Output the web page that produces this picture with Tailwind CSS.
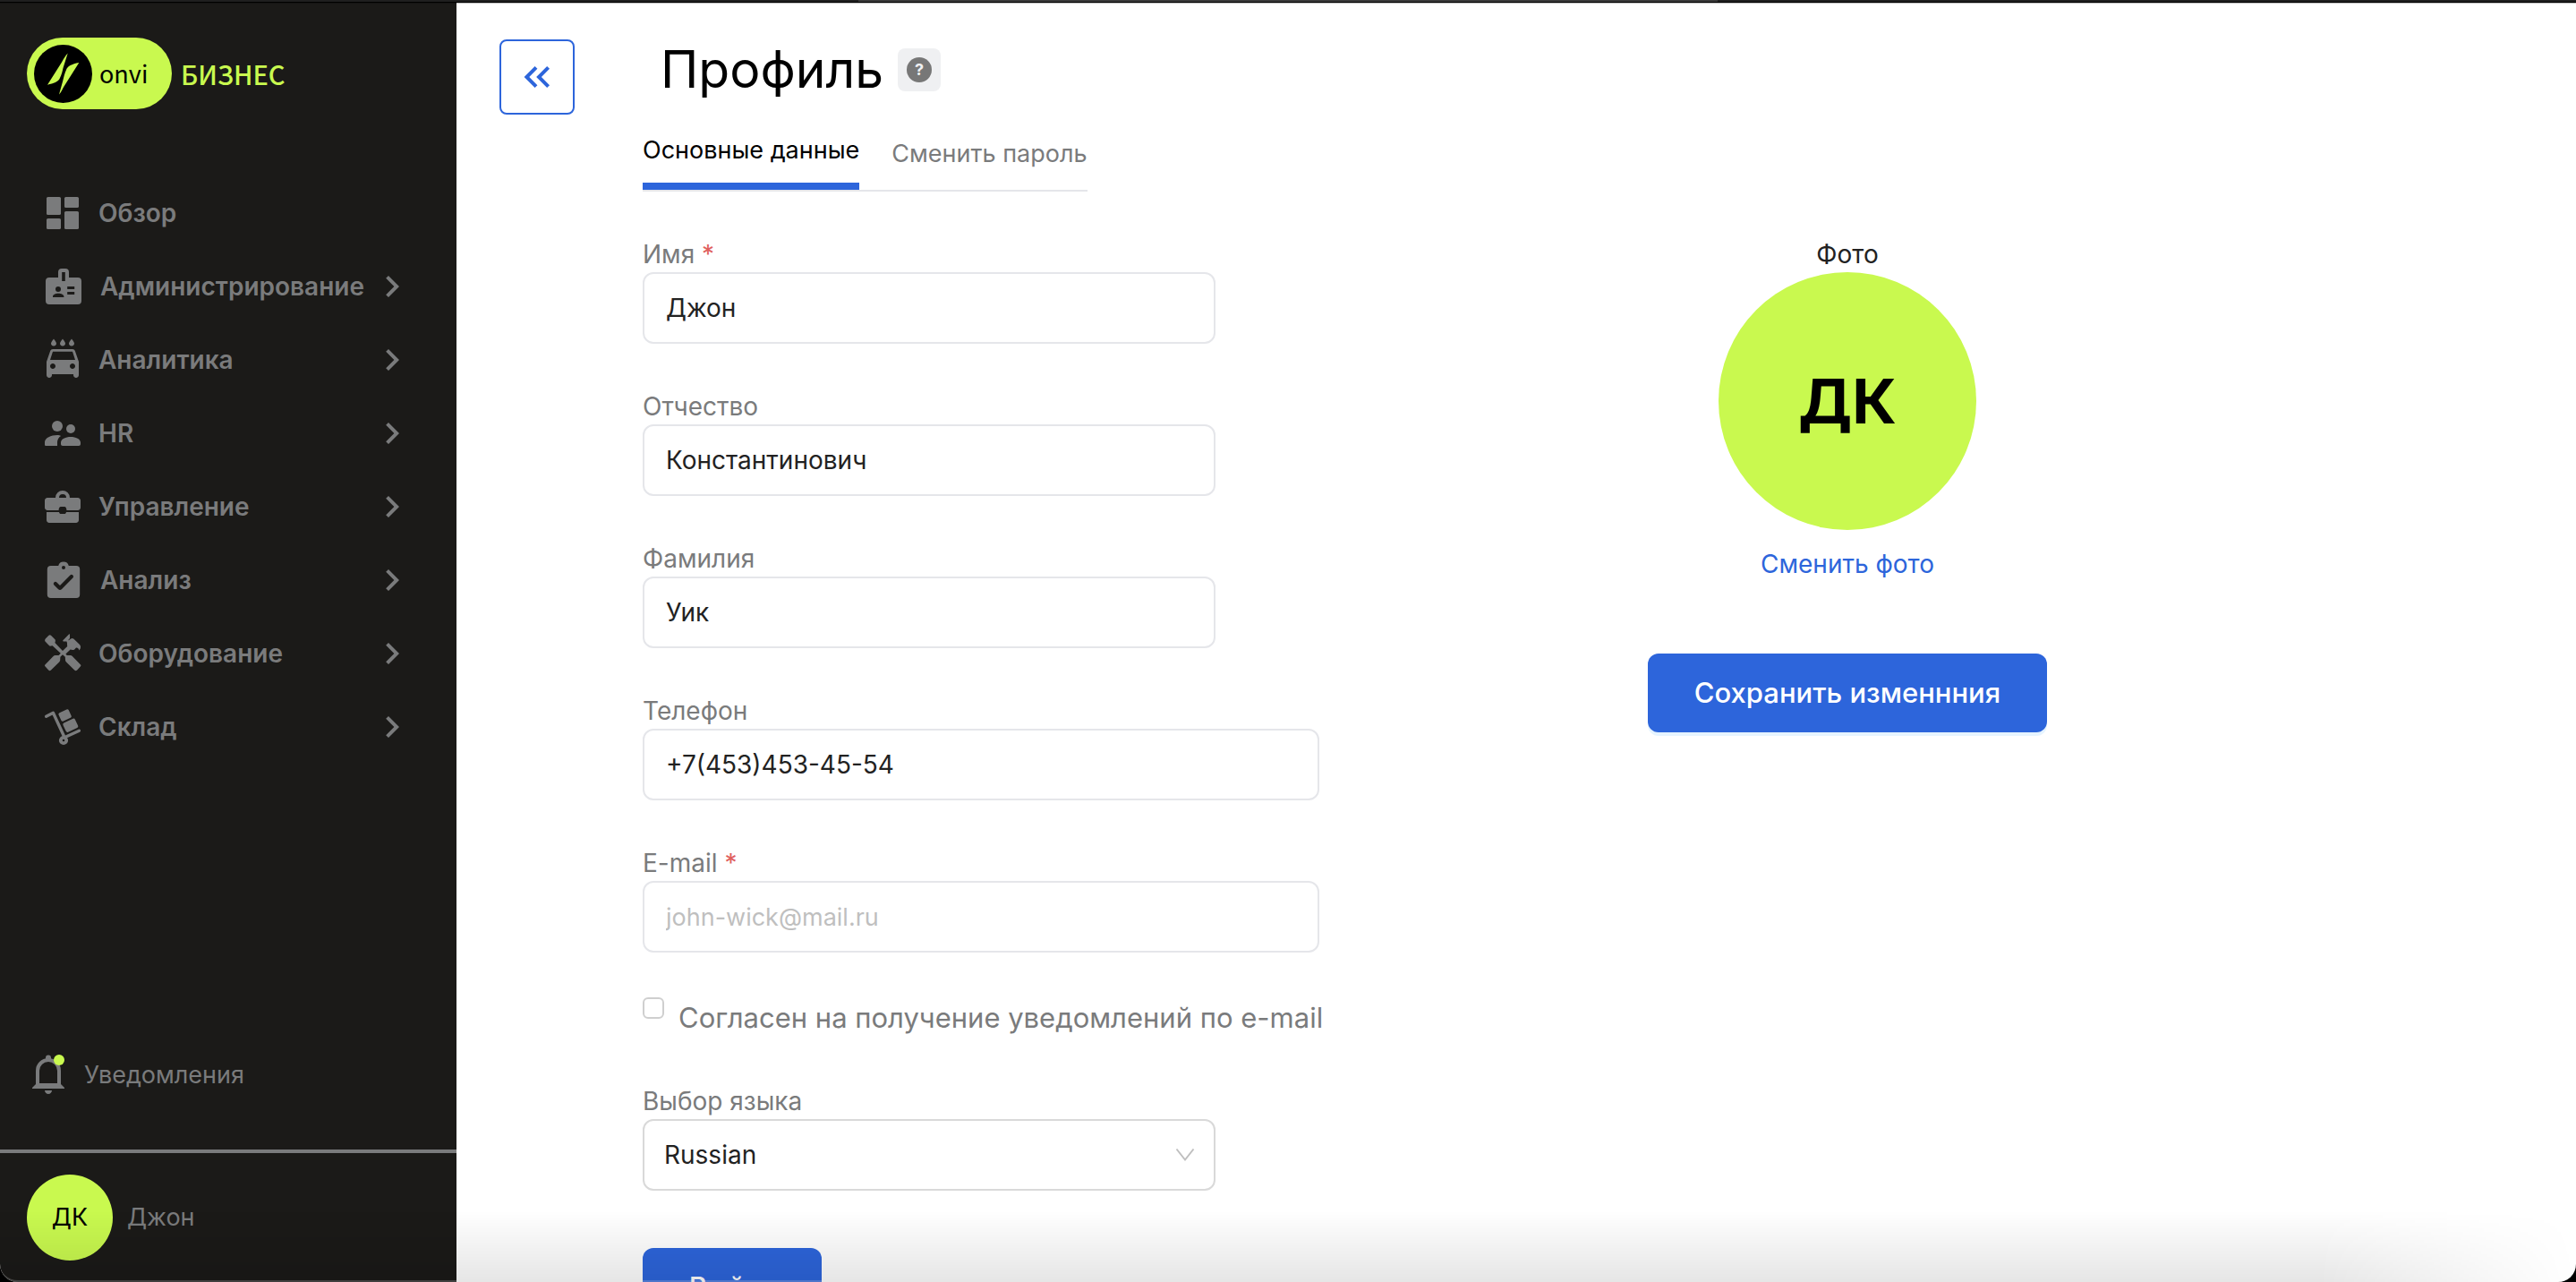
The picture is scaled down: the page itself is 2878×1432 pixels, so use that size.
<!DOCTYPE html>
<html lang="ru">
<head>
<meta charset="utf-8">
<meta name="viewport" content="width=device-width, initial-scale=1">
<title>Профиль</title>
<script src="https://cdn.jsdelivr.net/npm/@tailwindcss/browser@4"></script>
</head>
<body class="bg-black font-['Inter',sans-serif] text-[28px] leading-10 text-[#7a7b7c]">
<div class="relative flex h-screen flex-col overflow-hidden">
  <div class="flex h-[3px] shrink-0 border-b border-black bg-[#1f1f1f]">
    <div class="flex-1"></div>
    <div class="flex-1 bg-[#3a3a3a]"></div>
    <div class="flex-1"></div>
  </div>
  <div class="relative flex min-h-0 flex-1 overflow-hidden rounded-b-[20px] bg-white">
    <aside class="flex w-[510px] shrink-0 flex-col bg-[#1b1a18]">
      <a href="#" class="mt-[39px] ml-[30px] flex items-center gap-2.5 font-['Noto_Sans_CJK_SC',sans-serif]">
        <span class="flex h-20 w-[162px] items-center gap-2 rounded-full bg-[#c9f94f] pl-2 text-black">
          <svg class="size-[65px]" viewBox="0 0 65 65" aria-hidden="true">
            <circle cx="32.500" cy="32.500" r="32.500" fill="#000"/>
            <path d="M37.700 9.500C35 12 33 16 31 19.500L15 44.800c7-2 12-3 14-7.800 2-4 2.800-8 3.500-11ZM50.300 20C42 21.500 37.500 24 36 28c-2 4-3 9-3.700 12L28 55.500c2.500-2.500 3.700-6 5.500-9Z" fill="#c9f94f"/>
          </svg>
          <span class="text-[27px]">onvi</span>
        </span>
        <span class="text-[29px] font-medium text-[#c9f94f]">БИЗНЕС</span>
      </a>

      <nav class="mt-[75px] flex flex-col font-semibold">
        <a href="#" class="flex h-[82px] items-center gap-4 pl-[46px]">
          <svg class="size-12 shrink-0" viewBox="0 0 24 24" fill="currentColor" aria-hidden="true"><rect x="3" y="3" width="8" height="10" rx=".8"/><rect x="13" y="3" width="8" height="6" rx=".8"/><rect x="3" y="15" width="8" height="6" rx=".8"/><rect x="13" y="11" width="8" height="10" rx=".8"/></svg>
          <span>Обзор</span>
        </a>
        <button class="flex h-[82px] items-center gap-4 pr-12 pl-[46px] text-left">
          <svg class="h-12 w-[50px] shrink-0" viewBox="0 0 25 24" fill="currentColor" fill-rule="evenodd" aria-hidden="true"><path d="M20.500 7H15.500V4a2 2 0 0 0-2-2h-2a2 2 0 0 0-2 2v3H4.500a2 2 0 0 0-2 2v11a2 2 0 0 0 2 2h16a2 2 0 0 0 2-2V9a2 2 0 0 0-2-2ZM9.500 12a1.500 1.500 0 1 1 0 3 1.500 1.500 0 0 1 0-3Zm3.200 6H6.500v-.4c0-1 1.500-1.700 3.100-1.700s3.100.7 3.100 1.700Zm-1.100-9V4h1.800v5Zm7 7.500h-4V15h4Zm0-3h-4V12h4Z"/></svg>
          <span class="flex-1">Администрирование</span>
          <svg class="-ml-4 size-12 shrink-0" viewBox="0 0 24 24" fill="currentColor" aria-hidden="true"><path d="M10 6 8.590 7.410 13.170 12l-4.580 4.590L10 18l6-6z"/></svg>
        </button>
        <button class="flex h-[82px] items-center gap-4 pr-12 pl-[46px] text-left">
          <svg class="size-12 shrink-0" viewBox="0 0 24 24" fill="currentColor" fill-rule="evenodd" aria-hidden="true"><path d="M18.920 7.010C18.720 6.420 18.160 6 17.500 6h-11c-.66 0-1.210.42-1.420 1.010L3 13v7.500c0 .83.67 1.500 1.500 1.500S6 21.330 6 20.500V20h12v.5c0 .83.67 1.500 1.500 1.500s1.500-.67 1.500-1.500V13zM6.500 17c-.83 0-1.500-.67-1.500-1.500s.67-1.500 1.500-1.500S8 14.670 8 15.500 7.330 17 6.500 17m11 0c-.83 0-1.500-.67-1.500-1.500s.67-1.500 1.500-1.500 1.500.67 1.500 1.500-.67 1.500-1.500 1.500M5 12l1.500-4.600h11L19 12z"/><path d="M7 .2C6.500 1 5.500 2 5.500 2.800a1.500 1.400 0 0 0 3 0C8.500 2 7.500 1 7 .2ZM12 .2c-.5.8-1.500 1.800-1.500 2.600a1.500 1.400 0 0 0 3 0c0-.8-1-1.800-1.500-2.600ZM17 .2c-.5.8-1.500 1.800-1.500 2.600a1.500 1.400 0 0 0 3 0c0-.8-1-1.800-1.500-2.600Z"/></svg>
          <span class="flex-1">Аналитика</span>
          <svg class="-ml-4 size-12 shrink-0" viewBox="0 0 24 24" fill="currentColor" aria-hidden="true"><path d="M10 6 8.590 7.410 13.170 12l-4.580 4.590L10 18l6-6z"/></svg>
        </button>
        <button class="flex h-[82px] items-center gap-4 pr-12 pl-[46px] text-left">
          <svg class="size-12 shrink-0" viewBox="0 0 24 24" fill="currentColor" aria-hidden="true"><circle cx="9" cy="8" r="3"/><circle cx="16.500" cy="9.500" r="2.500"/><path d="M9 13c-3.500 0-7 1.500-7 4v1.200c0 .5.3.8.8.8H9v-2c0-1.400.8-2.700 2-3.500C10.500 13.100 9.800 13 9 13ZM16.500 14c-2.800 0-5.500 1.200-5.500 3.200V18c0 .6.400 1 1 1h9c.6 0 1-.4 1-1v-.8c0-2-2.700-3.200-5.500-3.200Z"/></svg>
          <span class="flex-1">HR</span>
          <svg class="-ml-4 size-12 shrink-0" viewBox="0 0 24 24" fill="currentColor" aria-hidden="true"><path d="M10 6 8.590 7.410 13.170 12l-4.580 4.590L10 18l6-6z"/></svg>
        </button>
        <button class="flex h-[82px] items-center gap-4 pr-12 pl-[46px] text-left">
          <svg class="size-12 shrink-0" viewBox="0 0 24 24" fill="currentColor" fill-rule="evenodd" aria-hidden="true"><path d="M8 7a4 4 0 0 1 8 0h4.500c.8 0 1.500.7 1.500 1.500v4c0 .8-.7 1.500-1.500 1.500H14.200c0-1-.4-2-1.200-2h-2c-.8 0-1.200 1-1.200 2H3.500c-.8 0-1.500-.7-1.500-1.500v-4C2 7.700 2.700 7 3.500 7Zm2 0h4a2 2 0 0 0-4 0Z"/><path d="M3 15h7c.2.700.5 1 1 1h2c.500 0 .8-.3 1-1h7v4.500c0 .8-.7 1.500-1.500 1.500h-15c-.8 0-1.500-.7-1.500-1.500Z"/></svg>
          <span class="flex-1">Управление</span>
          <svg class="-ml-4 size-12 shrink-0" viewBox="0 0 24 24" fill="currentColor" aria-hidden="true"><path d="M10 6 8.590 7.410 13.170 12l-4.580 4.590L10 18l6-6z"/></svg>
        </button>
        <button class="flex h-[82px] items-center gap-4 pr-12 pl-[46px] text-left">
          <svg class="h-12 w-[50px] shrink-0" viewBox="0 0 25 24" fill="currentColor" fill-rule="evenodd" aria-hidden="true"><path d="M19.600 4h-4.200a3 3 0 0 0-5.800 0H5.400a2 2 0 0 0-2 2v14a2 2 0 0 0 2 2h14.200a2 2 0 0 0 2-2V6a2 2 0 0 0-2-2Zm-7.100 0a1 1 0 1 1 0 2 1 1 0 0 1 0-2Zm-2 13.500c-.4 0-.6-.1-.9-.4L7.200 14.700a1 1 0 0 1 1.500-1.500l1.800 1.800 5.700-5.700a1 1 0 0 1 1.500 1.500l-6.300 6.300c-.3.300-.5.400-.9.400Z"/></svg>
          <span class="flex-1">Анализ</span>
          <svg class="-ml-4 size-12 shrink-0" viewBox="0 0 24 24" fill="currentColor" aria-hidden="true"><path d="M10 6 8.590 7.410 13.170 12l-4.580 4.590L10 18l6-6z"/></svg>
        </button>
        <button class="flex h-[82px] items-center gap-4 pr-12 pl-[46px] text-left">
          <svg class="size-12 shrink-0" viewBox="0 0 24 24" fill="currentColor" aria-hidden="true"><path d="M2.500 3.600 4.100 2c.5-.5 1-.5 1.500 0l2 2c.4.4.4.7.3 1.300L7.700 6l4.300 4.500 2.600-2.500c-.2-1 .1-2-.4-2.600L16.600 3.800c.5-.5 1-.4 1.500 0L21.500 7c.8.8.8 2.200-.3 3.200-.3-1.200-1-1.600-1.700-1.400l-.9.900c-.9.600-1.600.2-2.300.1l-2.600 2.500.7.700h1.900c.5 0 .8.200 1.100.5l4.500 4.600c.4.400.4.800 0 1.200l-1.800 1.900c-.5.500-1 .5-1.500 0l-4.600-4.500c-.4-.4-.5-.7-.5-1.200l-.1-1.600L12 12.600l-1.300 1.300-.1 1.600c0 .5-.1.800-.5 1.200l-4.600 4.500c-.5.500-.9.500-1.400 0L2.300 19.300c-.4-.4-.4-.8 0-1.200l4.500-4.600c.3-.3.600-.5 1.100-.5h1.900l1.100-1.100L6.300 7.600l-.8.200c-.5.100-.8 0-1.200-.4L2.500 5.500c-.6-.6-.6-1.200 0-1.900ZM12.300 4.500l3.200-3.200c.3-.3.500-.2.500.2V3.500l-.8.900v.8h-2.700c-.5 0-.5-.4-.2-.7Z"/></svg>
          <span class="flex-1">Оборудование</span>
          <svg class="-ml-4 size-12 shrink-0" viewBox="0 0 24 24" fill="currentColor" aria-hidden="true"><path d="M10 6 8.590 7.410 13.170 12l-4.580 4.590L10 18l6-6z"/></svg>
        </button>
        <button class="flex h-[82px] items-center gap-4 pr-12 pl-[46px] text-left">
          <svg class="size-12 shrink-0" viewBox="0 0 24 24" fill="currentColor" aria-hidden="true"><path d="m2.800 6.100 3.900-2 6.200 13.400" fill="none" stroke="currentColor" stroke-width="1.700" stroke-linecap="round" stroke-linejoin="round"/><path d="m13 17.900 8.200-3.800" fill="none" stroke="currentColor" stroke-width="1.700" stroke-linecap="round"/><circle cx="12.500" cy="19.500" r="1.600" fill="none" stroke="currentColor" stroke-width="1.900"/><rect x="10.200" y="2.900" width="6.200" height="5.200" rx=".9" transform="rotate(-25 13.300 5.500)"/><rect x="12.700" y="8.300" width="7.400" height="5.600" rx=".9" transform="rotate(-25 16.400 11.100)"/></svg>
          <span class="flex-1">Склад</span>
          <svg class="-ml-4 size-12 shrink-0" viewBox="0 0 24 24" fill="currentColor" aria-hidden="true"><path d="M10 6 8.590 7.410 13.170 12l-4.580 4.590L10 18l6-6z"/></svg>
        </button>
      </nav>

      <a href="#" class="mt-auto mb-[59px] flex items-center gap-4 pl-[30px] text-[27px]">
        <svg class="size-12" viewBox="0 0 24 24" aria-hidden="true"><path d="M12 22.500c1.100 0 2-.9 2-2h-4c0 1.100.9 2 2 2Z" fill="currentColor"/><path d="M12 3.500A6 6 0 0 0 6 9.500v8h12v-8a6 6 0 0 0-6-6Z" fill="none" stroke="currentColor" stroke-width="2"/><path d="M5 17h14l2 2v.5H3V19ZM10.500 3.500V2.200a1.500 1.500 0 0 1 3 0v1.300Z" fill="currentColor"/><circle cx="18" cy="3.500" r="3" fill="#c9f94f"/></svg>
        <span>Уведомления</span>
      </a>
      <a href="#" class="flex items-center gap-4 border-t-4 border-[#7a7b7c] px-[30px] py-6 text-[27px]">
        <span class="flex size-24 items-center justify-center rounded-full bg-[#c9f94f] text-black">ДК</span>
        <span>Джон</span>
      </a>
    </aside>

    <main class="flex min-w-0 flex-1 items-start overflow-hidden px-12 pt-[41px]">
      <button aria-label="Свернуть меню" class="flex size-[84px] shrink-0 items-center justify-center rounded-lg border-2 border-[#2d65db] text-[#2d65db]">
        <svg class="size-12" viewBox="0 0 24 24" fill="none" stroke="currentColor" stroke-width="2" aria-hidden="true"><path d="m11.500 6.700-5.300 5.300 5.300 5.300M18.300 6.700 13 12l5.300 5.300"/></svg>
      </button>
      <div class="ml-[76px] min-w-0 flex-1">
        <div class="flex items-center gap-4 pl-5">
          <h1 class="text-[57px] leading-[68px] text-black">Профиль</h1>
          <button aria-label="Справка" class="flex size-12 items-center justify-center rounded-lg bg-[#eff0f2]">
            <span class="flex size-7 items-center justify-center rounded-full bg-[#777] text-[18px] leading-7 font-bold text-[#eff0f2]">?</span>
          </button>
        </div>
        <div role="tablist" class="mt-9 flex w-fit gap-9 border-b-2 border-[#e5e6ea] text-[27px]">
          <button role="tab" aria-selected="true" class="flex h-16 items-start border-b-8 border-[#2d65db] text-black">Основные данные</button>
          <button role="tab" aria-selected="false" class="flex h-16 items-start pt-1">Сменить пароль</button>
        </div>

        <div class="mt-[50px] grid grid-cols-[756px_1fr] items-start">
          <form class="flex flex-col gap-[50px]">
            <div class="flex flex-col">
              <label for="name">Имя <span class="text-[#e0605e]">*</span></label>
              <input id="name" value="Джон" class="h-20 w-[640px] rounded-xl border-2 border-[#e5e6ea] px-6 text-[#222]">
            </div>
            <div class="flex flex-col">
              <label for="patronymic">Отчество</label>
              <input id="patronymic" value="Константинович" class="h-20 w-[640px] rounded-xl border-2 border-[#e5e6ea] px-6 text-[#222]">
            </div>
            <div class="flex flex-col">
              <label for="surname">Фамилия</label>
              <input id="surname" value="Уик" class="h-20 w-[640px] rounded-xl border-2 border-[#e5e6ea] px-6 text-[#222]">
            </div>
            <div class="flex flex-col">
              <label for="phone">Телефон</label>
              <input id="phone" type="tel" value="+7(453)453-45-54" class="h-20 rounded-xl border-2 border-[#e5e6ea] px-6 text-[#222]">
            </div>
            <div class="flex flex-col">
              <label for="email">E-mail <span class="text-[#e0605e]">*</span></label>
              <input id="email" type="email" placeholder="john-wick@mail.ru" class="h-20 rounded-xl border-2 border-[#e5e6ea] px-6 text-[27px] text-[#222] placeholder:text-[#bfbfbf]">
            </div>
            <div class="flex h-[46px] items-start gap-4">
              <input id="agree" type="checkbox" class="size-6 shrink-0 appearance-none rounded-md border-2 border-[#cfcfcf] bg-white">
              <label for="agree" class="text-[31px] leading-[46px] whitespace-nowrap">Согласен на получение уведомлений по e-mail</label>
            </div>
            <div class="relative flex w-[640px] flex-col">
              <label for="language">Выбор языка</label>
              <select id="language" class="h-20 appearance-none rounded-xl border-2 border-[#d9d9d9] bg-white px-[22px] text-[#222]"><option>Russian</option></select>
              <svg class="pointer-events-none absolute right-[22px] bottom-7 size-6" viewBox="0 0 24 24" fill="none" stroke="#bfbfbf" stroke-width="2" aria-hidden="true"><path d="m2.500 5.500 9.500 12 9.500-12"/></svg>
            </div>
            <button type="button" class="mt-[14px] h-[88px] w-[200px] rounded-xl bg-[#2d65db] text-[31px] font-medium text-white">Выйти</button>
          </form>

          <section class="flex flex-col items-center pr-44">
            <p class="text-[#222]">Фото</p>
            <div class="flex size-72 items-center justify-center rounded-full bg-[#c9f94f] text-[69px] font-bold text-black">ДК</div>
            <button class="mt-[18px] text-[#2d65db]">Сменить фото</button>
            <button class="mt-20 h-[88px] rounded-xl bg-[#2d65db] px-[52px] text-[31px] font-medium text-white shadow-[0_4px_0_#0591ff1a]">Сохранить изменнния</button>
          </section>
        </div>
      </div>
    </main>
    <div class="pointer-events-none absolute inset-0 rounded-b-[20px] border-t border-b-2 border-t-black/25 border-b-white/20"></div>
  </div>
  <div class="pointer-events-none absolute inset-x-0 bottom-0 h-20 rounded-b-[20px] bg-linear-to-t from-black/10 to-transparent mask-r-from-90%"></div>
</div>
</body>
</html>
